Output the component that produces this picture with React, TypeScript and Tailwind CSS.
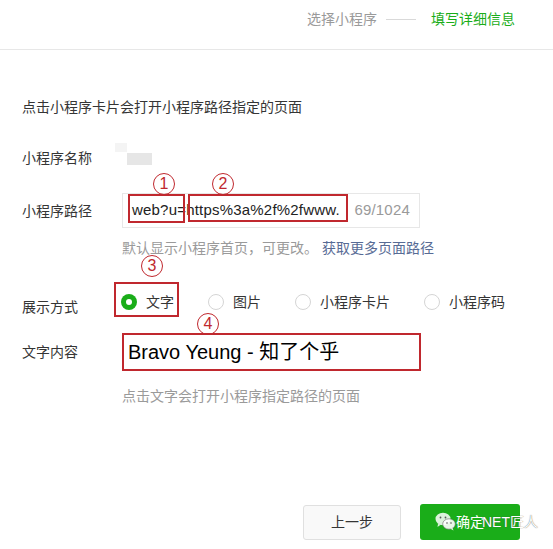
import type { ReactNode } from "react"

const font = { fontFamily: '"Liberation Sans", "Noto Sans CJK SC", sans-serif' }

function Mark({ n, className }: { n: string; className: string }) {
  return (
    <span
      className={`absolute flex h-[22px] w-[22px] items-center justify-center rounded-full border-[1.5px] border-[#c0282e] text-[16px] leading-none text-[#c0282e] ${className}`}
    >
      {n}
    </span>
  )
}

function Row({ label, children, className = "" }: { label: string; children: ReactNode; className?: string }) {
  return (
    <div className={`flex items-center ${className}`}>
      <div className="w-[100px] shrink-0 text-[14px] leading-5 text-[#353535]">{label}</div>
      {children}
    </div>
  )
}

function Radio({ label, checked = false }: { label: string; checked?: boolean }) {
  return (
    <div className="mr-[34px] flex shrink-0 items-center whitespace-nowrap">
      {checked ? (
        <span className="flex h-4 w-4 items-center justify-center rounded-full bg-[#1aad19]">
          <span className="h-[6px] w-[6px] rounded-full bg-white" />
        </span>
      ) : (
        <span className="h-4 w-4 rounded-full border border-[#d5d5d5] bg-white" />
      )}
      <span className="ml-[9px] text-[14px] leading-5 text-[#353535]">{label}</span>
    </div>
  )
}

function WeChatMark() {
  return (
    <svg width="21" height="19" viewBox="0 0 21 19" fill="none">
      <ellipse cx="8" cy="7" rx="7.5" ry="6.2" fill="white" fillOpacity="0.85" />
      <path d="M3 12 L2.5 15 L6 12.5 Z" fill="white" fillOpacity="0.85" />
      <ellipse cx="14" cy="12" rx="6.3" ry="5.2" fill="white" fillOpacity="0.9" stroke="#6a6a6a" strokeWidth="0.6" />
      <path d="M17.5 16 L18.5 18.5 L15.5 16.8 Z" fill="white" fillOpacity="0.9" />
      <circle cx="5.5" cy="5.5" r="0.9" fill="#555" />
      <circle cx="10.5" cy="5.5" r="0.9" fill="#555" />
      <circle cx="12" cy="11" r="0.8" fill="#555" />
      <circle cx="16" cy="11" r="0.8" fill="#555" />
    </svg>
  )
}

export default function App() {
  return (
    <div className="relative h-[549px] w-[553px] overflow-hidden bg-white" style={font}>
      {/* steps */}
      <div className="flex h-[50px] items-start justify-end border-b border-[#e7e7e7] pr-[38px] pt-[9px] text-[14px] leading-5">
        <span className="text-[#9a9a9a]">选择小程序</span>
        <span className="mx-[9px] mt-[10px] h-px w-[30px] bg-[#d9d9d9]" />
        <span className="ml-[6px] text-[#1aad19]">填写详细信息</span>
      </div>

      <div className="px-[22px]">
        <p className="mt-[47px] text-[14px] leading-5 text-[#353535]">点击小程序卡片会打开小程序路径指定的页面</p>

        <Row label="小程序名称" className="mt-[31px]">
          <div className="relative h-5 w-[40px]">
            <span className="absolute left-[-7px] top-[-5px] h-[9px] w-[12px] bg-[#f4f4f4]" />
            <span className="absolute left-[5px] top-[5px] h-[12px] w-[25px] bg-[#e6e6e6]" />
          </div>
        </Row>

        <Row label="小程序路径" className="mt-[25px]">
          <div className="flex h-[35px] w-[298px] items-center justify-between whitespace-nowrap border border-[#e7e7e7] pl-[9px] pr-[9px] text-[15px] tracking-[0.2px]">
            <span className="text-[#222]">web?u=https%3a%2f%2fwww.</span>
            <span className="text-[#9a9a9a]">69/1024</span>
          </div>
        </Row>

        <p className="ml-[100px] mt-[10px] whitespace-nowrap text-[14px] leading-5 text-[#9a9a9a]">
          默认显示小程序首页，可更改。 <span className="text-[#576b95]">获取更多页面路径</span>
        </p>

        <div className="mt-[34px] flex items-start">
          <div className="mt-[5px] w-[99px] shrink-0 text-[14px] leading-5 text-[#353535]">展示方式</div>
          <div className="flex items-center">
            <Radio label="文字" checked />
            <Radio label="图片" />
            <Radio label="小程序卡片" />
            <Radio label="小程序码" />
          </div>
        </div>

        <Row label="文字内容" className="mt-[16px]">
          <div className="flex h-[38px] w-[299px] items-center whitespace-nowrap border-2 border-[#c0282e] pl-[4px] text-[20px] text-black">
            Bravo Yeung - 知了个乎
          </div>
        </Row>

        <p className="ml-[100px] mt-[15px] text-[14px] leading-5 text-[#9a9a9a]">点击文字会打开小程序指定路径的页面</p>

        <div className="mr-[11px] mt-[98px] flex items-center justify-end gap-[19px]">
          <button className="h-[35px] w-[98px] rounded-[3px] border border-[#e0e0e0] bg-[#f9f9f9] text-[14px] text-[#353535]">
            上一步
          </button>
          <button className="relative h-[36px] w-[100px] whitespace-nowrap rounded-[3px] bg-[#1aad19] text-[14px] text-white">
            确定
            <span className="absolute left-[15px] top-[8px]">
              <WeChatMark />
            </span>
            <span className="absolute left-[62px] top-[8px] text-[14px] leading-5 text-white [text-shadow:0_0_1px_#444]">
              NET匠人
            </span>
          </button>
        </div>
      </div>

      {/* annotations */}
      <span className="absolute left-[128px] top-[194px] h-[29px] w-[57px] border-2 border-[#c0282e]" />
      <span className="absolute left-[188px] top-[194px] h-[28px] w-[160px] border-2 border-[#c0282e]" />
      <span className="absolute left-[114px] top-[282px] h-[35px] w-[65px] border-2 border-[#c0282e]" />
      <Mark n="1" className="left-[153px] top-[173px]" />
      <Mark n="2" className="left-[212px] top-[173px]" />
      <Mark n="3" className="left-[141px] top-[255px]" />
      <Mark n="4" className="left-[197px] top-[313px]" />
    </div>
  )
}
